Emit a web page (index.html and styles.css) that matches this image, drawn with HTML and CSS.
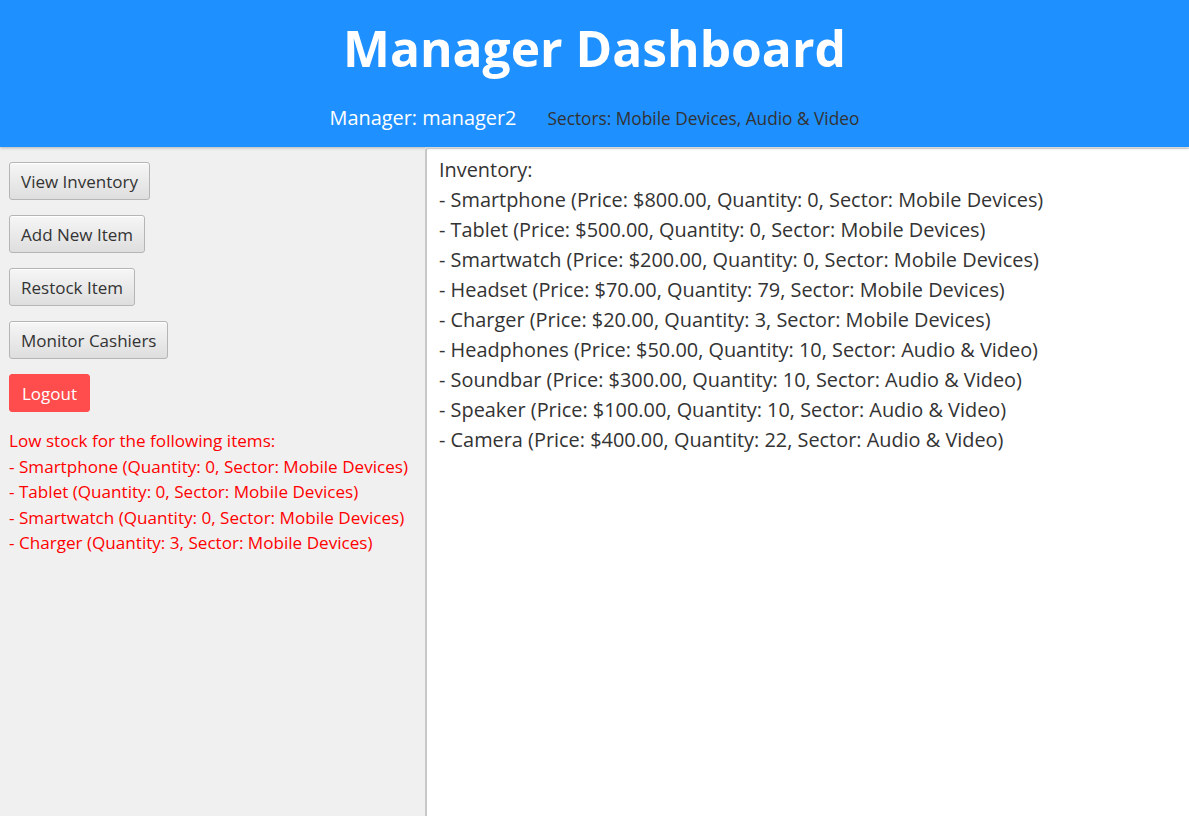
FILE: index.html
```html
<!DOCTYPE html>
<html>
<head>
<meta charset="utf-8">
<link rel="stylesheet" href="styles.css">
</head>
<body>
<header class="header">
  <h1 class="title">Manager Dashboard</h1>
  <div class="subtitle">
    <span class="manager">Manager: manager2</span>
    <span class="sectors">Sectors: Mobile Devices, Audio &amp; Video</span>
  </div>
</header>
<main class="main">
  <aside class="sidebar">
    <button class="btn">View Inventory</button>
    <button class="btn">Add New Item</button>
    <button class="btn">Restock Item</button>
    <button class="btn">Monitor Cashiers</button>
    <button class="btn btn-logout">Logout</button>
    <div class="lowstock">
      <div>Low stock for the following items:</div>
      <div>- Smartphone (Quantity: 0, Sector: Mobile Devices)</div>
      <div>- Tablet (Quantity: 0, Sector: Mobile Devices)</div>
      <div>- Smartwatch (Quantity: 0, Sector: Mobile Devices)</div>
      <div>- Charger (Quantity: 3, Sector: Mobile Devices)</div>
    </div>
  </aside>
  <section class="content">
    <div>Inventory:</div>
    <div>- Smartphone (Price: $800.00, Quantity: 0, Sector: Mobile Devices)</div>
    <div>- Tablet (Price: $500.00, Quantity: 0, Sector: Mobile Devices)</div>
    <div>- Smartwatch (Price: $200.00, Quantity: 0, Sector: Mobile Devices)</div>
    <div>- Headset (Price: $70.00, Quantity: 79, Sector: Mobile Devices)</div>
    <div>- Charger (Price: $20.00, Quantity: 3, Sector: Mobile Devices)</div>
    <div>- Headphones (Price: $50.00, Quantity: 10, Sector: Audio &amp; Video)</div>
    <div>- Soundbar (Price: $300.00, Quantity: 10, Sector: Audio &amp; Video)</div>
    <div>- Speaker (Price: $100.00, Quantity: 10, Sector: Audio &amp; Video)</div>
    <div>- Camera (Price: $400.00, Quantity: 22, Sector: Audio &amp; Video)</div>
  </section>
</main>
</body>
</html>
```
FILE: styles.css
```css
* { box-sizing: border-box; }
html, body { margin: 0; padding: 0; height: 100%; }
body {
  font-family: "Open Sans", "Noto Sans", sans-serif;
  color: #333;
  display: flex;
  flex-direction: column;
  overflow: hidden;
}
.header {
  background: #1e90ff;
  height: 147px;
  display: flex;
  flex-direction: column;
  align-items: center;
  box-shadow: 0 1px 3px rgba(0,0,0,0.25);
  position: relative;
  z-index: 1;
  flex: none;
}
.title {
  margin: 14px 0 0 0;
  font-size: 49.7px;
  font-weight: 700;
  color: #fff;
  line-height: 68px;
}
.subtitle {
  margin-top: 22px;
  display: flex;
  align-items: baseline;
  gap: 31px;
}
.manager { color: #fff; font-size: 19.9px; }
.sectors { color: #333; font-size: 17.3px; }
.main {
  flex: 1;
  display: flex;
  min-height: 0;
}
.sidebar {
  width: 425px;
  flex: none;
  background: #f0f0f0;
  padding: 15px 9px;
  display: flex;
  flex-direction: column;
  align-items: flex-start;
  gap: 15px;
}
.btn {
  font-family: inherit;
  font-size: 17px;
  color: #333;
  height: 38px;
  padding: 0 11px;
  border: 1px solid #b5b5b5;
  border-radius: 3px;
  background: linear-gradient(#f6f6f6, #dedede);
  box-shadow: inset 0 1px 0 #fff;
}
.btn-logout {
  background: #ff4c4c;
  border-color: #ff4c4c;
  color: #fff;
  box-shadow: none;
  padding: 0 12px;
}
.lowstock {
  color: #ff0000;
  font-size: 17.1px;
  line-height: 25.5px;
  margin-top: 1px;
}
.content {
  flex: 1;
  background: #fff;
  border-left: 2px solid #c8c8c8;
  border-top: 1px solid #e0e0e0;
  border-top-left-radius: 3px;
  margin-top: 1px;
  padding: 6px 12px;
  font-size: 19.9px;
  line-height: 30px;
  color: #333;
}
```
